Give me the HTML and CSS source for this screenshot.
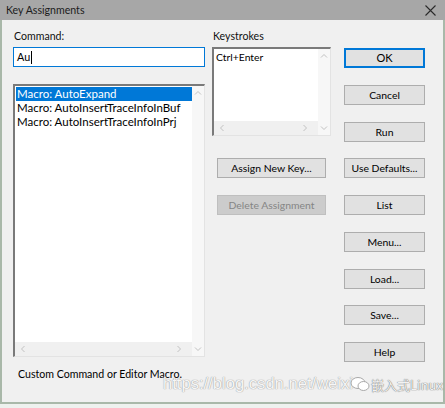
FILE: index.html
```html
<!DOCTYPE html>
<html>
<head>
<meta charset="utf-8">
<link rel="stylesheet" href="styles.css">
</head>
<body>
<div class="window">
  <div class="titlebar">
    <span class="title">Key Assignments</span>
    <svg class="close" width="11" height="11" viewBox="0 0 11 11"><path d="M0.5 0.5 L10.5 10.5 M10.5 0.5 L0.5 10.5" stroke="#2a2a2a" stroke-width="1.1" fill="none"/></svg>
  </div>
  <div class="client">
    <div class="col col-cmd">
      <div class="label">Command:</div>
      <div class="input"><span>Au</span><span class="caret"></span></div>
      <div class="listbox cmd-list">
        <div class="list-main">
          <div class="items">
            <div class="item selected">Macro: AutoExpand</div>
            <div class="item">Macro: AutoInsertTraceInfoInBuf</div>
            <div class="item">Macro: AutoInsertTraceInfoInPrj</div>
          </div>
          <div class="hscroll">
            <svg width="6" height="8" viewBox="0 0 6 8"><path d="M4.5 1 L1.5 4 L4.5 7" stroke="#c2c2c2" fill="none"/></svg>
            <svg width="6" height="8" viewBox="0 0 6 8"><path d="M1.5 1 L4.5 4 L1.5 7" stroke="#c2c2c2" fill="none"/></svg>
          </div>
        </div>
        <div class="vscroll">
          <svg width="8" height="6" viewBox="0 0 8 6"><path d="M1 4.5 L4 1.5 L7 4.5" stroke="#c2c2c2" fill="none"/></svg>
          <svg width="8" height="6" viewBox="0 0 8 6"><path d="M1 1.5 L4 4.5 L7 1.5" stroke="#c2c2c2" fill="none"/></svg>
        </div>
      </div>
      <div class="status">Custom Command or Editor Macro.</div>
    </div>
    <div class="col col-keys">
      <div class="label">Keystrokes</div>
      <div class="listbox key-list">
        <div class="list-main">
          <div class="items">
            <div class="item small">Ctrl+Enter</div>
          </div>
          <div class="hscroll">
            <svg width="6" height="8" viewBox="0 0 6 8"><path d="M4.5 1 L1.5 4 L4.5 7" stroke="#c2c2c2" fill="none"/></svg>
            <svg width="6" height="8" viewBox="0 0 6 8"><path d="M1.5 1 L4.5 4 L1.5 7" stroke="#c2c2c2" fill="none"/></svg>
          </div>
        </div>
        <div class="vscroll">
          <svg width="8" height="6" viewBox="0 0 8 6"><path d="M1 4.5 L4 1.5 L7 4.5" stroke="#c2c2c2" fill="none"/></svg>
          <svg width="8" height="6" viewBox="0 0 8 6"><path d="M1 1.5 L4 4.5 L7 1.5" stroke="#c2c2c2" fill="none"/></svg>
        </div>
      </div>
      <div class="key-buttons">
        <div class="btn wide">Assign New Key...</div>
        <div class="btn wide disabled">Delete Assignment</div>
      </div>
    </div>
    <div class="col col-btns">
      <div class="btn default">OK</div>
      <div class="btn">Cancel</div>
      <div class="btn">Run</div>
      <div class="btn">Use Defaults...</div>
      <div class="btn">List</div>
      <div class="btn">Menu...</div>
      <div class="btn">Load...</div>
      <div class="btn">Save...</div>
      <div class="btn">Help</div>
    </div>
    <div class="watermark">
      <span class="wm-url">https://blog.csdn.net/weixi</span>
      <svg class="wm-icon" width="20" height="16" viewBox="0 0 20 16"><ellipse cx="8" cy="7" rx="7" ry="5.5" fill="#fff" stroke="#a8a8a8"/><ellipse cx="13.5" cy="10" rx="5.5" ry="4.5" fill="#fff" stroke="#a8a8a8"/></svg>
      <span class="wm-name">嵌入式Linux</span>
    </div>
  </div>
</div>
</body>
</html>
```
FILE: styles.css
```css
* { box-sizing: border-box; }
html, body {
  margin: 0;
  padding: 0;
  width: 445px;
  height: 408px;
  background: #eef1ee;
  font-family: Lato, "Liberation Sans", sans-serif;
  font-size: 10.4px;
  color: #000;
  overflow: hidden;
}
.window {
  width: 445px;
  height: 404px;
  display: flex;
  flex-direction: column;
}
.titlebar {
  height: 20px;
  background: #a7a7a7;
  display: flex;
  align-items: center;
  justify-content: space-between;
  padding: 0 9px 0 6px;
  flex: none;
}
.title {
  color: #1c1c1c;
  font-size: 10.6px;
}
.client {
  flex: 1;
  position: relative;
  background: #f0f0f0;
  border: 2px solid #a9b8a9;
  border-top: none;
  display: flex;
  padding: 9px 0 0 11px;
}
.col { display: flex; flex-direction: column; }
.col-cmd { width: 192px; }
.col-keys { width: 119px; margin-left: 7px; }
.col-btns { width: 81px; margin-left: 13px; padding-top: 19px; gap: 16.75px; }
.label {
  height: 14px;
  line-height: 14px;
  margin-left: 1px;
  color: #111;
  font-size: 10.6px;
}
.input {
  margin-top: 4px;
  height: 20px;
  border: 1px solid #0078d7;
  background: #fff;
  display: flex;
  align-items: center;
  padding-left: 3px;
  line-height: 14px;
  font-size: 10.8px;
}
.caret {
  display: inline-block;
  width: 1px;
  height: 13px;
  background: #000;
  margin-left: 1px;
}
.listbox {
  display: flex;
  background: #fff;
  border-top: 2px solid #7a7a7a;
  border-left: 2px solid #7a7a7a;
  border-right: 1px solid #e3e3e3;
  border-bottom: 1px solid #e3e3e3;
}
.cmd-list { margin-top: 17px; height: 273px; }
.key-list { margin-top: 4px; height: 89px; }
.list-main {
  flex: 1;
  display: flex;
  flex-direction: column;
  min-width: 0;
}
.items { flex: 1; padding: 1px 0 0 1px; }
.item {
  height: 14px;
  line-height: 14px;
  padding-left: 1px;
  white-space: nowrap;
  font-size: 11.5px;
}
.item.small { font-size: 10.4px; }
.item.selected { background: #0078d7; color: #fff; }
.hscroll {
  height: 14px;
  background: #f0f0f0;
  display: flex;
  align-items: center;
  justify-content: space-between;
  padding: 0 10px 0 5px;
}
.vscroll {
  width: 12px;
  display: flex;
  flex-direction: column;
  justify-content: space-between;
  align-items: center;
  padding: 4px 0 4px;
  background: #f7f7f7;
}
.status {
  margin-top: 10px;
  margin-left: 5px;
  line-height: 14px;
  white-space: nowrap;
  font-size: 10.6px;
}
.key-buttons {
  margin-top: 22px;
  margin-left: 5px;
  display: flex;
  flex-direction: column;
  gap: 17px;
}
.btn {
  height: 20px;
  background: #e1e1e1;
  border: 1px solid #adadad;
  display: flex;
  align-items: center;
  justify-content: center;
  white-space: nowrap;
  line-height: 14px;
}
.btn.wide { width: 109px; }
.btn.default {
  border-color: #0078d7;
  box-shadow: inset 0 0 0 1px #0078d7;
  font-size: 11px;
}
.btn.disabled {
  background: #cccccc;
  border-color: #bfbfbf;
  color: #858585;
}
.watermark {
  position: absolute;
  left: 161px;
  top: 354px;
  display: flex;
  align-items: center;
  gap: 1px;
  font-family: "Liberation Sans", sans-serif;
}
.wm-url {
  font-size: 16.6px;
  color: #f6f6f6;
  text-shadow: 0 0 1px #a0a0a0, 0 0 1px #a0a0a0;
}
.wm-icon { margin-left: -4px; }
.wm-name {
  font-size: 13px;
  color: #f2f2f2;
  text-shadow: 0 0 1px #777, 0 0 1px #777;
  font-family: "Noto Sans CJK SC", "Liberation Sans", sans-serif;
}
```
